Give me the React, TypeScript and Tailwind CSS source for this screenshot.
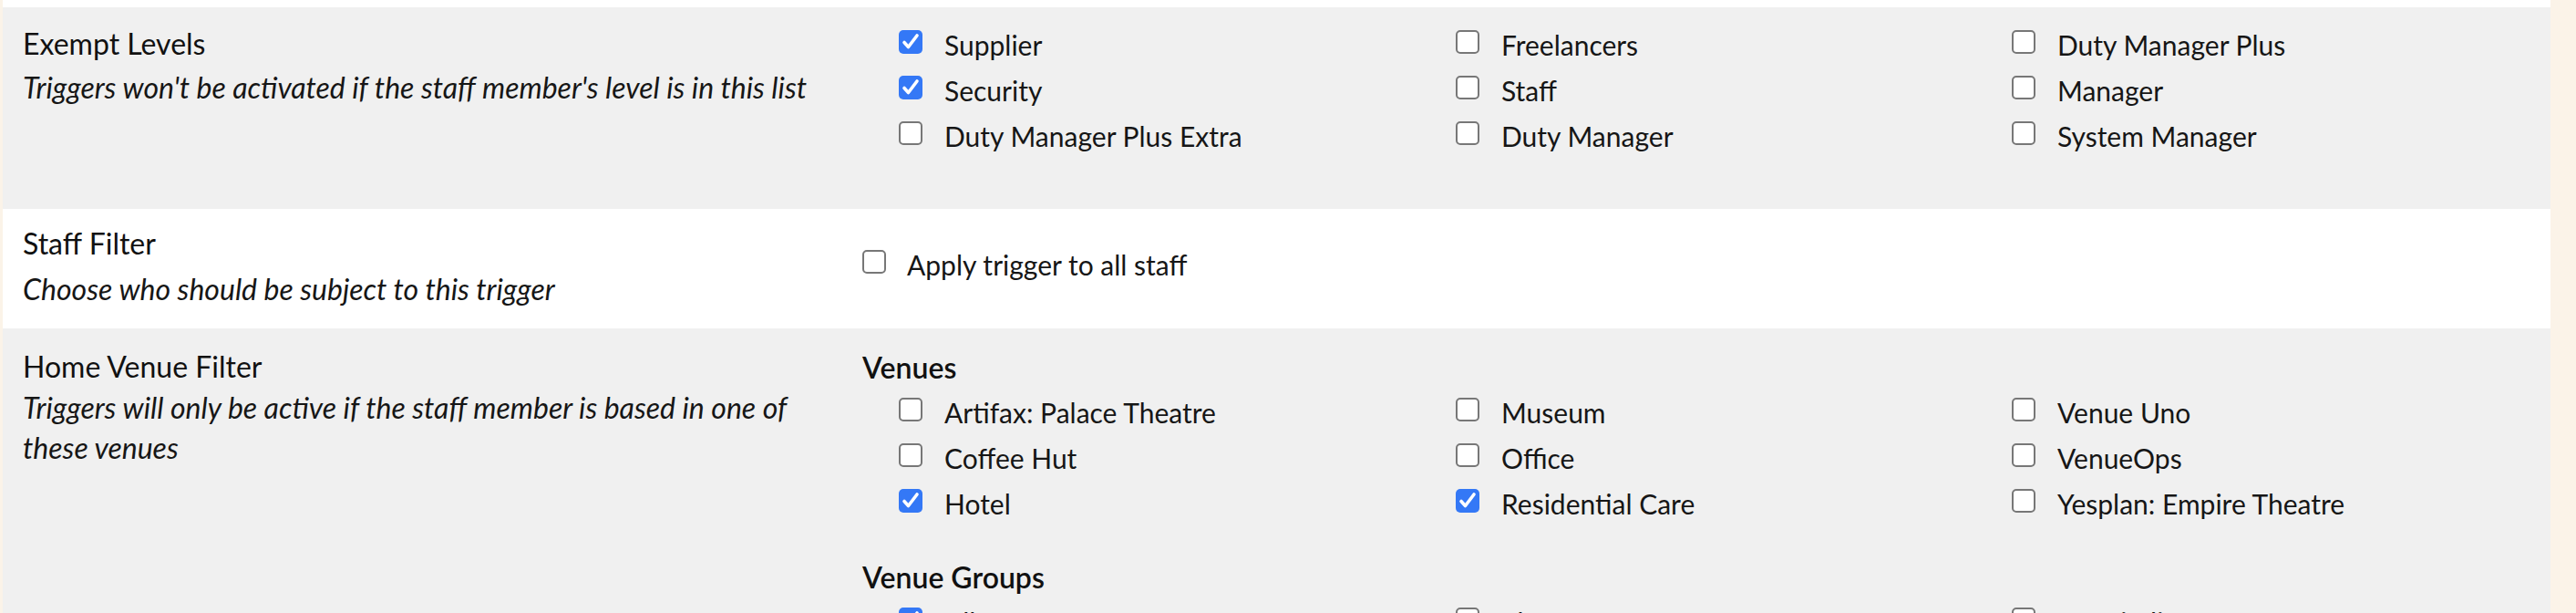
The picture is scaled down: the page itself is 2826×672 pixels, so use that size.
import React from 'react';

interface Option {
  label: string;
  checked: boolean;
}

const exemptLevels: Option[] = [
  { label: 'Supplier', checked: true },
  { label: 'Freelancers', checked: false },
  { label: 'Duty Manager Plus', checked: false },
  { label: 'Security', checked: true },
  { label: 'Staff', checked: false },
  { label: 'Manager', checked: false },
  { label: 'Duty Manager Plus Extra', checked: false },
  { label: 'Duty Manager', checked: false },
  { label: 'System Manager', checked: false },
];

const venues: Option[] = [
  { label: 'Artifax: Palace Theatre', checked: false },
  { label: 'Museum', checked: false },
  { label: 'Venue Uno', checked: false },
  { label: 'Coffee Hut', checked: false },
  { label: 'Office', checked: false },
  { label: 'VenueOps', checked: false },
  { label: 'Hotel', checked: true },
  { label: 'Residential Care', checked: true },
  { label: 'Yesplan: Empire Theatre', checked: false },
];

const venueGroups: Option[] = [
  { label: 'All Venues', checked: true },
  { label: 'Theatres', checked: false },
  { label: 'Hospitality', checked: false },
];

const Checkbox: React.FC<{ checked: boolean }> = ({ checked }) =>
  checked ? (
    <span className="flex h-[26px] w-[26px] shrink-0 items-center justify-center rounded-[5px] bg-[#3478f6]">
      <svg viewBox="0 0 26 26" className="h-[26px] w-[26px]">
        <path
          d="M6 13.5 L10.5 18.5 L20 6"
          stroke="white"
          strokeWidth="3.6"
          fill="none"
          strokeLinecap="round"
          strokeLinejoin="round"
        />
      </svg>
    </span>
  ) : (
    <span className="h-[26px] w-[26px] shrink-0 rounded-[5px] border-2 border-[#777777] bg-white" />
  );

const CheckItem: React.FC<{ option: Option }> = ({ option }) => (
  <label className="flex h-[50px] items-center gap-[24px] text-[30px] text-[#161616]">
    <Checkbox checked={option.checked} />
    <span className="whitespace-nowrap pt-[6px]">{option.label}</span>
  </label>
);

const CheckGrid: React.FC<{ options: Option[] }> = ({ options }) => (
  <div className="ml-[40px] grid grid-cols-[611px_610px_611px]">
    {options.map((o) => (
      <CheckItem key={o.label} option={o} />
    ))}
  </div>
);

const App: React.FC = () => {
  return (
    <div className="h-[672px] overflow-hidden bg-[#fbf3e8] font-['Lato',sans-serif]">
      <div className="ml-[3px] w-[2795px]">
        {/* tail of the previous row */}
        <div className="h-[8px] bg-white" />

        {/* Exempt Levels */}
        <div className="flex bg-[#f0f0f0]">
          <div className="w-[943px] shrink-0 pl-[22px] pr-[60px] pt-[18px]">
            <div className="text-[32px] leading-[44px] text-[#111111]">Exempt Levels</div>
            <div className="mt-[4px] text-[32px] italic leading-[44px] text-[#161616]">
              Triggers won't be activated if the staff member's level is in this list
            </div>
          </div>
          <div className="pb-[58px] pt-[13px]">
            <CheckGrid options={exemptLevels} />
          </div>
        </div>

        {/* Staff Filter */}
        <div className="flex bg-white">
          <div className="w-[943px] shrink-0 pb-[21px] pl-[22px] pr-[60px] pt-[16px]">
            <div className="text-[32px] leading-[44px] text-[#111111]">Staff Filter</div>
            <div className="mt-[6px] text-[32px] italic leading-[44px] text-[#161616]">
              Choose who should be subject to this trigger
            </div>
          </div>
          <div className="pt-[33px]">
            <label className="flex h-[50px] items-center gap-[23px] text-[30px] text-[#161616]">
              <Checkbox checked={false} />
              <span className="pt-[6px]">Apply trigger to all staff</span>
            </label>
          </div>
        </div>

        {/* Home Venue Filter */}
        <div className="flex bg-[#f0f0f0]">
          <div className="w-[943px] shrink-0 pl-[22px] pr-[60px] pt-[20px]">
            <div className="text-[32px] leading-[44px] text-[#111111]">Home Venue Filter</div>
            <div className="mt-[1px] text-[32px] italic leading-[44px] text-[#161616]">
              Triggers will only be active if the staff member is based in one of these venues
            </div>
          </div>
          <div className="pt-[21px]">
            <div className="text-[32px] font-semibold leading-[43px] text-[#111111]">Venues</div>
            <CheckGrid options={venues} />
            <div className="mt-[37px] text-[32px] font-semibold leading-[43px] text-[#111111]">
              Venue Groups
            </div>
            <CheckGrid options={venueGroups} />
          </div>
        </div>
      </div>
    </div>
  );
};

export default App;
